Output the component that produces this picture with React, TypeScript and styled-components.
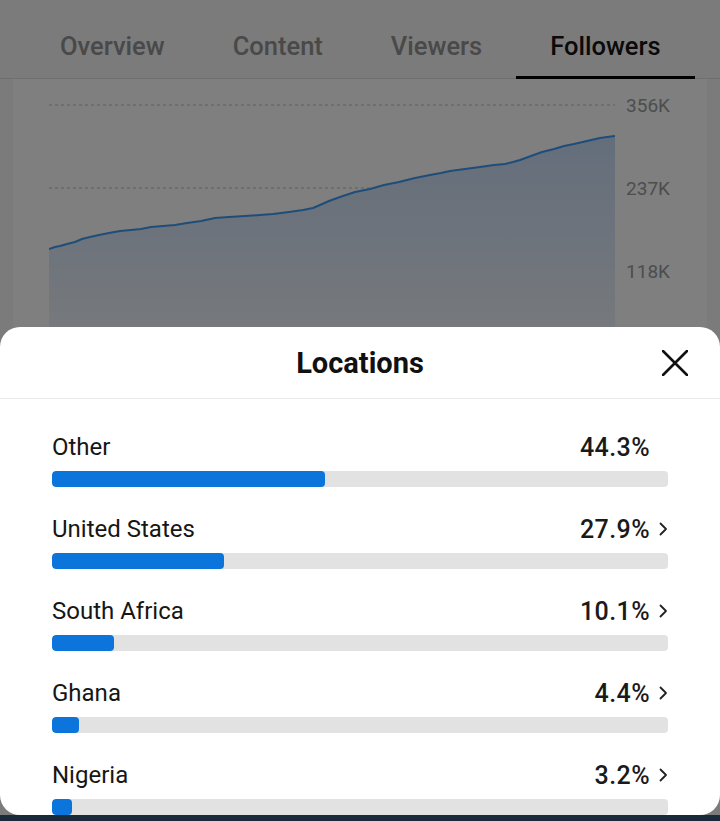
import styled, { createGlobalStyle } from "styled-components";

const GlobalStyle = createGlobalStyle`
  * { box-sizing: border-box; }
  body {
    margin: 0;
    font-family: Roboto, "Liberation Sans", Arial, sans-serif;
    background: #f6f6f6;
  }
`;

const tabs = ["Overview", "Content", "Viewers", "Followers"];

const locations = [
  { name: "Other", pct: 44.3, link: false },
  { name: "United States", pct: 27.9, link: true },
  { name: "South Africa", pct: 10.1, link: true },
  { name: "Ghana", pct: 4.4, link: true },
  { name: "Nigeria", pct: 3.2, link: true },
];

const points: [number, number][] = [
  [0, 154], [6, 152], [11, 151], [18, 149], [26, 147], [33, 144], [41, 142],
  [50, 140], [60, 138], [71, 136], [82, 135], [92, 134], [102, 132],
  [114, 131], [126, 130], [138, 128], [152, 126], [166, 123], [180, 122],
  [196, 121], [211, 120], [224, 119], [240, 117], [254, 115], [264, 113],
  [271, 110], [280, 106], [291, 102], [306, 97], [321, 94], [335, 90],
  [350, 87], [366, 83], [381, 80], [392, 78], [401, 76], [416, 74],
  [431, 72], [445, 70], [456, 69], [464, 67], [471, 65], [482, 61],
  [493, 57], [505, 54], [515, 51], [525, 49], [538, 46], [551, 43],
  [558, 42], [566, 41],
];

const linePath = points.map(([x, y], i) => `${i ? "L" : "M"}${x} ${y}`).join(" ");
const areaPath = `${linePath} L566 240 L0 240 Z`;

const grid = [
  { y: 10, label: "356K" },
  { y: 93, label: "237K" },
  { y: 176, label: "118K" },
];

const App = () => {
  return (
    <Screen>
      <GlobalStyle />
      <Page>
        <TabBar>
          {tabs.map((t) => (
            <Tab key={t} $active={t === "Followers"}>
              {t}
            </Tab>
          ))}
        </TabBar>
        <Card>
          <Chart width="640" height="240" viewBox="0 0 640 240">
            <defs>
              <linearGradient id="area" x1="0" y1="0" x2="0" y2="1">
                <stop offset="0%" stopColor="#c8dcf6" />
                <stop offset="100%" stopColor="#eef3fa" />
              </linearGradient>
            </defs>
            {grid.map((g) => (
              <g key={g.label}>
                <line
                  x1="0"
                  x2="566"
                  y1={g.y}
                  y2={g.y}
                  stroke="#bcbcbc"
                  strokeWidth="1.2"
                  strokeDasharray="3 3"
                />
                <text
                  x="621"
                  y={g.y + 7}
                  textAnchor="end"
                  fontSize="19"
                  fill="#9a9a9a"
                  fontFamily="Roboto, sans-serif"
                >
                  {g.label}
                </text>
              </g>
            ))}
            <path d={areaPath} fill="url(#area)" />
            <path d={linePath} fill="none" stroke="#3d9af2" strokeWidth="2" strokeLinejoin="round" />
          </Chart>
        </Card>
        <BottomNav />
      </Page>
      <Dim />
      <Sheet>
        <SheetHeader>
          <SheetTitle>Locations</SheetTitle>
          <CloseButton aria-label="Close">
            <svg width="26" height="26" viewBox="0 0 26 26">
              <path d="M1 1 L25 25 M25 1 L1 25" stroke="#111" strokeWidth="2.6" strokeLinecap="round" />
            </svg>
          </CloseButton>
        </SheetHeader>
        <List>
          {locations.map((l) => (
            <Row key={l.name}>
              <RowTop>
                <Country>{l.name}</Country>
                <Percent>
                  {l.pct}%
                  <Chevron>
                    {l.link && (
                      <svg width="9" height="14" viewBox="0 0 9 14">
                        <path d="M1.5 1.5 L7 7 L1.5 12.5" fill="none" stroke="#222" strokeWidth="1.8" strokeLinecap="round" strokeLinejoin="round" />
                      </svg>
                    )}
                  </Chevron>
                </Percent>
              </RowTop>
              <Track>
                <Fill style={{ width: `${l.pct}%` }} />
              </Track>
            </Row>
          ))}
        </List>
      </Sheet>
    </Screen>
  );
};

const Screen = styled.div`
  position: relative;
  width: 720px;
  height: 821px;
  overflow: hidden;
`;

const Page = styled.div`
  display: flex;
  flex-direction: column;
  height: 100%;
  background: #f6f6f6;
`;

const TabBar = styled.div`
  display: flex;
  height: 79px;
  padding-left: 26px;
  border-bottom: 1px solid #dcdcdc;
  background: #f6f6f6;
`;

const Tab = styled.div<{ $active?: boolean }>`
  display: flex;
  align-items: flex-end;
  padding: 0 34px 15px;
  font-size: 25.5px;
  font-weight: 500;
  color: ${(p) => (p.$active ? "#141414" : "#929292")};
  border-bottom: 3px solid ${(p) => (p.$active ? "#000" : "transparent")};
  margin-bottom: -1px;
`;

const Card = styled.div`
  flex: 1;
  margin: 0 13px;
  background: #ffffff;
  padding: 16px 0 0 36px;
`;

const Chart = styled.svg`
  display: block;
`;

const BottomNav = styled.div`
  height: 6px;
  background: #34547a;
`;

const Dim = styled.div`
  position: absolute;
  inset: 0;
  background: rgba(0, 0, 0, 0.5);
`;

const Sheet = styled.div`
  position: absolute;
  left: 0;
  right: 0;
  top: 327px;
  height: 488px;
  background: #fff;
  border-radius: 20px;
  overflow: hidden;
`;

const SheetHeader = styled.div`
  position: relative;
  display: flex;
  align-items: center;
  justify-content: center;
  height: 72px;
  border-bottom: 1px solid #e9e9e9;
`;

const SheetTitle = styled.h2`
  margin: 0;
  font-size: 29px;
  font-weight: 700;
  color: #111;
`;

const CloseButton = styled.button`
  position: absolute;
  right: 32px;
  top: 23px;
  display: flex;
  padding: 0;
  border: 0;
  background: none;
`;

const List = styled.div`
  display: flex;
  flex-direction: column;
  gap: 29px;
  padding: 35px 52px 0;
`;

const Row = styled.div`
  display: flex;
  flex-direction: column;
  gap: 11px;
`;

const RowTop = styled.div`
  display: flex;
  justify-content: space-between;
  align-items: center;
  height: 26px;
`;

const Country = styled.span`
  font-size: 24px;
  color: #161616;
`;

const Percent = styled.span`
  display: flex;
  align-items: center;
  font-size: 25px;
  font-weight: 500;
  letter-spacing: 0.4px;
  color: #1a1a1a;
`;

const Chevron = styled.span`
  display: flex;
  justify-content: flex-end;
  width: 18px;
`;

const Track = styled.div`
  height: 16px;
  border-radius: 4px;
  background: #e2e2e2;
  overflow: hidden;
`;

const Fill = styled.div`
  height: 100%;
  border-radius: 4px;
  background: #0b75dc;
`;

export default App;
